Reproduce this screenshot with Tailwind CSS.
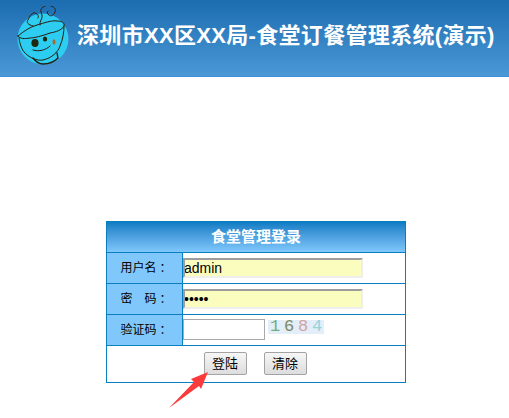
<!DOCTYPE html>
<html lang="zh-CN">
<head>
    <meta charset="UTF-8">
    <meta name="viewport" content="width=device-width, initial-scale=1.0">
    <title>食堂订餐管理系统</title>
    <script src="https://cdn.jsdelivr.net/npm/@tailwindcss/browser@4"></script>
</head>
<body class="bg-white font-['Liberation_Sans','Noto_Sans_CJK_SC',sans-serif] min-h-[418px]">
    <!-- top banner -->
    <header class="h-[77px] flex items-center pl-[17px] border-b border-[#3b8fdc] bg-gradient-to-b from-[#1a6db0] to-[#4a98d6]">
        <svg class="w-[54px] h-[60px] -mt-[4px] shrink-0" viewBox="17 3 54 60" fill="none" stroke="#2a1c0c" stroke-width="1" stroke-linecap="round">
            <circle cx="43" cy="36" r="25.5" fill="#2ccdf0" stroke="none"/>
            <path d="M18 33C24 28 30 24 37 22C44 20 52 17 57 18C62 18 65 20 64 23C62 27 56 29 50 30C42 33 34 35 30 35C25 36 20 36 18 33Z"/>
            <path d="M19 35C20 42 22 47 25 50C30 55 37 58 43 57C52 55 58 49 60 43C63 36 64 29 64 23"/>
            <path d="M33 55C36 59 40 61 43 61C48 61 54 59 58 55L57 50" stroke-width="1.3"/>
            <path d="M33 23C28 22 26 19 28 17C30 12 33 9 35 10C38 11 39 13 38 15"/>
            <path d="M40 22C39 18 43 16 42 12C41 9 40 7 42 5C45 2 49 2 51 3C55 4 56 7 55 9C54 12 51 14 49 12C47 11 47 9 48 8"/>
            <ellipse cx="35" cy="40" rx="3.6" ry="4" fill="#1d2a12" stroke="none"/>
            <ellipse cx="45" cy="36" rx="2.2" ry="2.6" fill="#1d2a12" stroke="none"/>
            <ellipse cx="54" cy="39" rx="1.5" ry="2.8" fill="#a8682e" stroke="none"/>
            <path d="M33 47C39 49 46 47 50 43"/>
        </svg>
        <h1 class="ml-[6px] -mt-[5px] text-[22px] leading-[30px] font-bold text-white whitespace-nowrap tracking-[0.32px]">深圳市XX区XX局-食堂订餐管理系统(演示)</h1>
    </header>

    <!-- login box -->
    <form class="relative w-[300px] ml-[106px] mt-[144px] border border-[#0a7fc0] text-[12px] text-black">
        <div class="h-[30px] flex items-center justify-center font-bold text-[15px] text-white bg-gradient-to-b from-[#0a7cc4] to-[#7fc8fc]">食堂管理登录</div>

        <div class="h-[31px] flex border-t border-[#0a7fc0]">
            <label class="w-[76px] shrink-0 flex items-center justify-center border-r border-[#0a7fc0] bg-[#80c8fc]">用户名<span class="font-['Noto_Sans_CJK_TC',sans-serif]">：</span></label>
            <div class="flex-1 flex items-center">
                <input type="text" value="admin" class="w-[180px] h-[20px] border-2 border-t-[#9d9d9d] border-l-[#9d9d9d] border-r-[#eeeeee] border-b-[#eeeeee] bg-[#fbfdbf] text-[14px] [text-indent:-1px] outline-none">
            </div>
        </div>

        <div class="h-[31px] flex border-t border-[#0a7fc0]">
            <label class="w-[76px] shrink-0 flex items-center justify-center border-r border-[#0a7fc0] bg-[#80c8fc]">密<span class="w-[12px]"></span>码<span class="font-['Noto_Sans_CJK_TC',sans-serif]">：</span></label>
            <div class="flex-1 flex items-center">
                <input type="password" value="admin" class="w-[180px] h-[20px] border-2 border-t-[#9d9d9d] border-l-[#9d9d9d] border-r-[#eeeeee] border-b-[#eeeeee] bg-[#fbfdbf] text-[14px] [text-indent:-1px] outline-none">
            </div>
        </div>

        <div class="h-[31px] flex border-t border-[#0a7fc0]">
            <label class="w-[76px] shrink-0 flex items-center justify-center border-r border-[#0a7fc0] bg-[#80c8fc]">验证码<span class="font-['Noto_Sans_CJK_TC',sans-serif]">：</span></label>
            <div class="flex-1 flex items-start pt-[4px]">
                <input type="text" class="w-[82px] h-[21px] border border-[#a9a9a9] bg-white outline-none">
                <div class="ml-[3px] mt-[1px] w-[56px] h-[14px] grid grid-cols-4 text-center bg-[#e3eef8] font-['Liberation_Mono',monospace] text-[17px] leading-[14px]">
                    <span class="text-[#6fae80]">1</span>
                    <span class="text-[#7d8866]">6</span>
                    <span class="text-[#d0a3a5]">8</span>
                    <span class="text-[#94d3d8]">4</span>
                </div>
            </div>
        </div>

        <div class="h-[37px] flex items-start justify-center gap-[17px] pt-[6px] pr-[2px] border-t border-[#0a7fc0]">
            <button type="button" class="w-[43px] h-[23px] border border-[#a3a3a3] rounded-[2px] bg-gradient-to-b from-[#f6f6f6] to-[#dddddd] text-[13px]">登陆</button>
            <button type="button" class="w-[43px] h-[23px] border border-[#a3a3a3] rounded-[2px] bg-gradient-to-b from-[#f6f6f6] to-[#dddddd] text-[13px]">清除</button>
        </div>

        <!-- annotation arrow -->
        <svg class="absolute left-[60px] top-[130px] w-[50px] h-[60px]" viewBox="0 0 50 60">
            <polygon points="41,20 24,27 27,30 2,56 32,34 34,37" fill="#fb3b3b"/>
        </svg>
    </form>
</body>
</html>
